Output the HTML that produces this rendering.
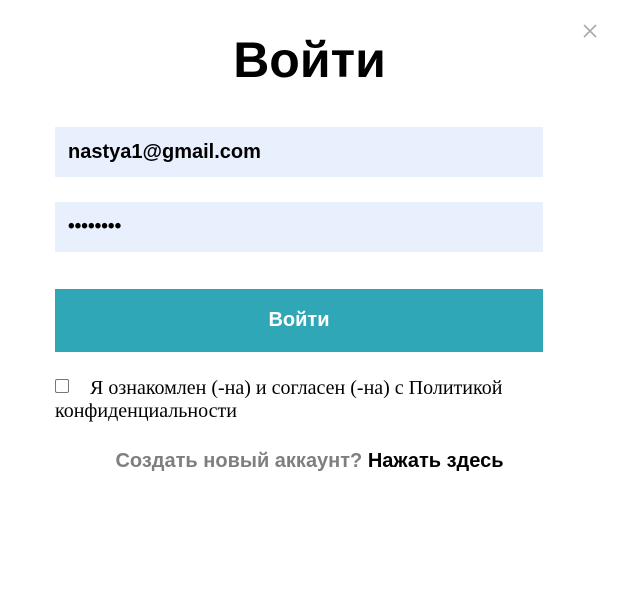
<!DOCTYPE html>
<html><head><meta charset="utf-8"><style>
body{margin:0;width:619px;height:596px;background:#fff;position:relative;font-family:"Liberation Sans",sans-serif;overflow:hidden}
.x{position:absolute;left:583px;top:24px}
h1{position:absolute;left:0;width:619px;top:31px;margin:0;text-align:center;font-size:50px;font-weight:bold;line-height:58px;color:#000}
.in{position:absolute;left:55px;width:488px;height:50px;background:#e8f0fe;box-sizing:border-box;padding-left:13px;font-size:20px;font-weight:bold;line-height:50px;color:#000}
.btn{position:absolute;left:55px;top:289px;width:488px;height:63px;background:#2fa7b7;color:#fff;font-size:20px;font-weight:bold;text-align:center;line-height:63px}
.cb{position:absolute;left:55px;top:379px;width:14px;height:14px;border:1px solid #767676;border-radius:2px;box-sizing:border-box}
.t{position:absolute;left:55px;top:377px;width:470px;font-family:"Liberation Serif",serif;font-size:20px;line-height:23px;text-indent:35px}
.c{position:absolute;left:0;width:619px;top:449px;text-align:center;font-size:20px;font-weight:bold;line-height:24px}
</style></head><body>
<svg class="x" width="14" height="14"><path d="M1 1L13 13M13 1L1 13" stroke="#aaa" stroke-width="1.6"/></svg>
<h1>Войти</h1>
<div class="in" style="top:127px">nastya1@gmail.com</div>
<div class="in" style="top:202px;font-size:19px">••••••••</div>
<div class="btn">Войти</div>
<div class="cb"></div>
<div class="t">Я ознакомлен (-на) и согласен (-на) с Политикой конфиденциальности</div>
<div class="c"><span style="color:#7f7f7f">Создать новый аккаунт?</span> <span style="color:#000">Нажать здесь</span></div>
</body></html>
